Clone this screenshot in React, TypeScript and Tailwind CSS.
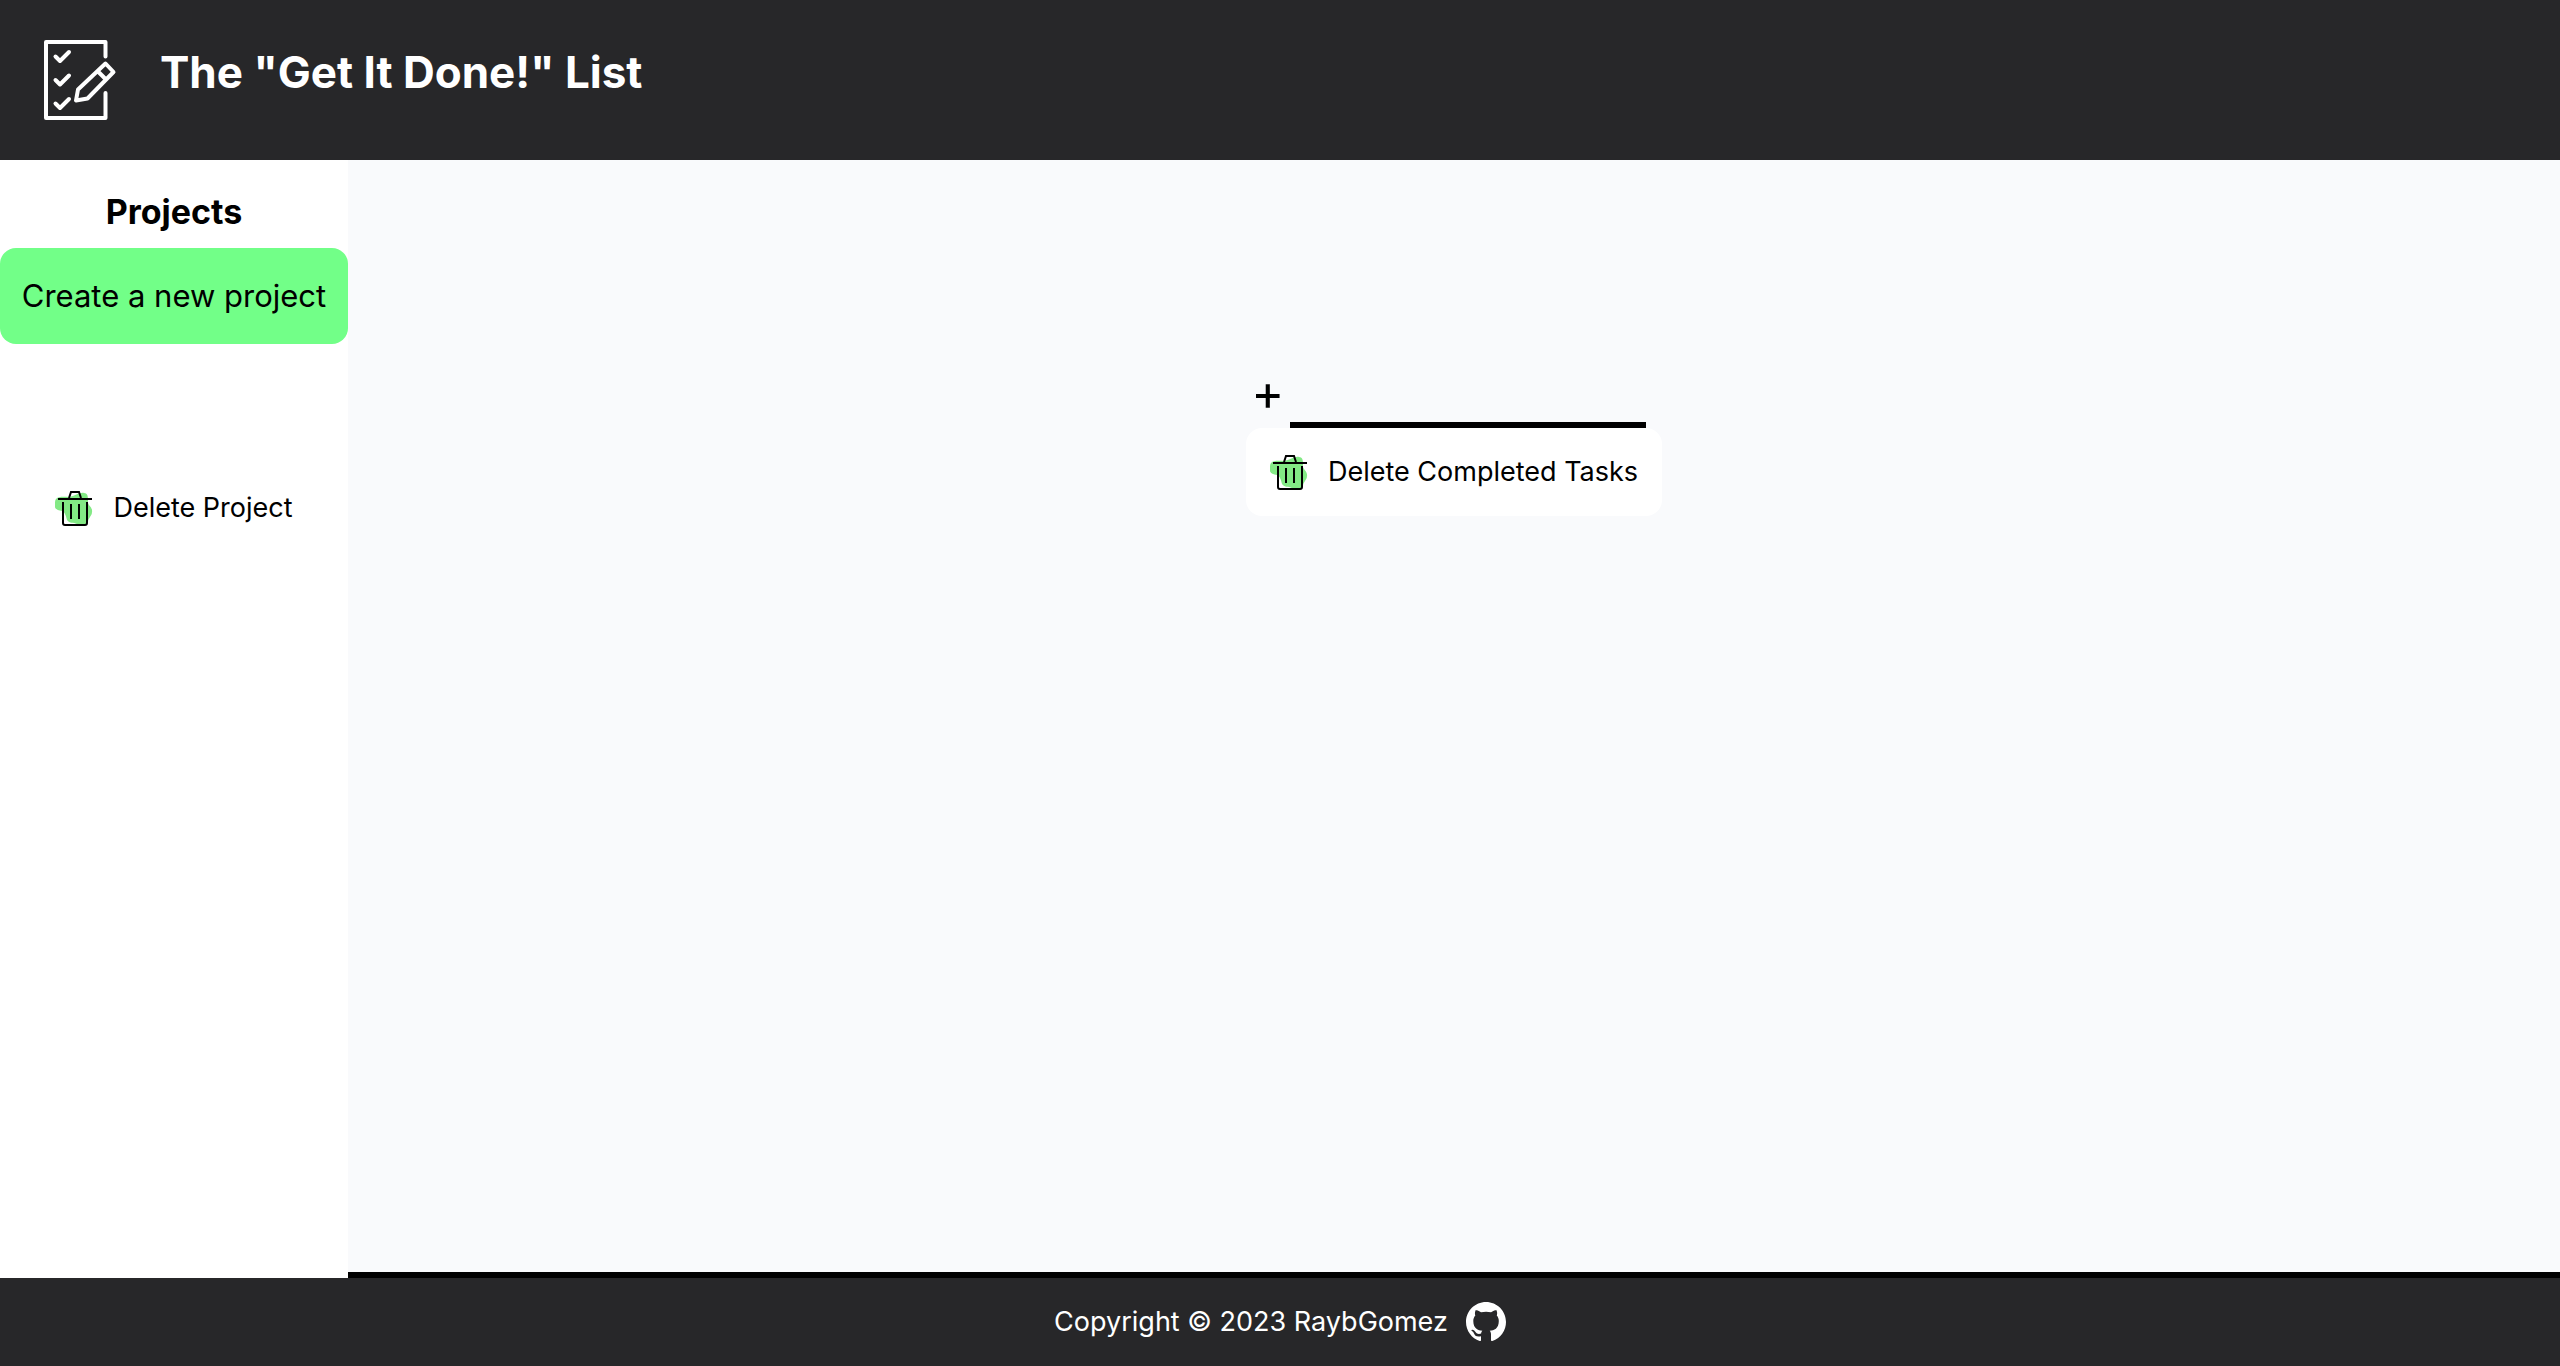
import type { ReactNode } from "react";

function ListLogo() {
  return (
    <svg viewBox="0 0 80 80" className="size-20 shrink-0" fill="none" stroke="#fff" strokeWidth="4" strokeLinecap="round" strokeLinejoin="round" aria-hidden="true">
      <path d="M65.5 16.5V2H6V78H65.5V53" />
      <path d="M15.5 16.5L20 21L29 12M15.5 40L20 44.5L29 35.5M15.5 63.5L20 68L29 59" />
      <path d="M65.5 23.5L73.5 32L47.500 58.500L36 60.500L38 49.500ZM58.500 32L65.500 39" />
    </svg>
  );
}

function TrashIcon() {
  return (
    <svg viewBox="2 0 40 40" className="size-10 shrink-0" fill="none" aria-hidden="true">
      <path d="M3 11C6 8 11 9 16 9C22 8 27 4 31 5C35 5 35 9 35 13C34 17 40 19 39 24C39 28 35 30 35 34C33 39 27 38 24 36C20 34 17 36 14 32C13 28 12 24 9 23C4 22 1 21 2 16C2 14 2 12 3 11Z" fill="#83e985" />
      <path d="M5 11H39M16 10L18 4H26L28 10M10 14V35Q10 37 12 37H32Q34 37 34 35V14M18 16V31M26 16V31" stroke="#000" strokeWidth="2" />
    </svg>
  );
}

function GitHubMark() {
  return (
    <svg viewBox="0 0 16 16" className="size-10" fill="#fff" aria-hidden="true">
      <path d="M8 0C3.58 0 0 3.58 0 8c0 3.54 2.29 6.53 5.47 7.59.4.07.55-.17.55-.38 0-.19-.01-.82-.01-1.49-2.01.37-2.53-.49-2.69-.94-.09-.23-.48-.94-.82-1.13-.28-.15-.68-.52-.01-.53.63-.01 1.08.58 1.23.82.72 1.21 1.87.87 2.33.66.07-.52.28-.87.51-1.07-1.78-.2-3.64-.89-3.64-3.95 0-.87.31-1.59.82-2.15-.08-.2-.36-1.02.08-2.12 0 0 .67-.21 2.2.82.64-.18 1.32-.27 2-.27s1.36.09 2 .27c1.53-1.04 2.2-.82 2.2-.82.44 1.1.16 1.92.08 2.12.51.56.82 1.27.82 2.15 0 3.07-1.87 3.75-3.65 3.95.29.25.54.73.54 1.48 0 1.07-.01 1.93-.01 2.2 0 .21.15.46.55.38A8.01 8.01 0 0 0 16 8c0-4.42-3.58-8-8-8Z" />
    </svg>
  );
}

function DeleteButton({ children }: { children: ReactNode }) {
  return (
    <button type="button" className="flex h-22 items-center gap-[18px] rounded-2xl bg-white px-6 text-[27px] whitespace-nowrap">
      <TrashIcon />
      {children}
    </button>
  );
}

export default function App() {
  return (
    <div className="flex min-h-screen flex-col bg-white font-['Inter',sans-serif] text-black">
      <header className="flex h-40 items-start gap-10 bg-[#272729] px-10 py-10 text-white">
        <ListLogo />
        <h1 className="text-[44px] leading-16 font-bold">The "Get It Done!" List</h1>
      </header>
      <div className="flex grow">
        <aside className="flex w-[348px] shrink-0 flex-col items-center">
          <h2 className="pt-8 text-[34px] leading-10 font-bold">Projects</h2>
          <button type="button" className="mt-4 h-24 w-full rounded-2xl bg-[#72ff88] text-[31px] whitespace-nowrap">
            Create a new project
          </button>
          <div className="mt-30">
            <DeleteButton>Delete Project</DeleteButton>
          </div>
        </aside>
        <main className="flex grow flex-col items-center border-b-6 border-black bg-[#f9fafc] pt-52">
          <div className="flex flex-col">
            <form className="flex h-15 pr-4">
              <button type="button" aria-label="Add task" className="flex w-11 shrink-0 justify-center text-[50px] leading-12">
                +
              </button>
              <input type="text" aria-label="New task" className="w-0 grow border-b-6 border-black bg-transparent text-[30px] outline-none" />
            </form>
            <DeleteButton>Delete Completed Tasks</DeleteButton>
          </div>
        </main>
      </div>
      <footer className="flex h-22 items-center justify-center gap-[18px] bg-[#272729] text-[27px] text-white">
        <p>Copyright © 2023 RaybGomez</p>
        <a href="https://github.com/RaybGomez" aria-label="GitHub profile">
          <GitHubMark />
        </a>
      </footer>
    </div>
  );
}
